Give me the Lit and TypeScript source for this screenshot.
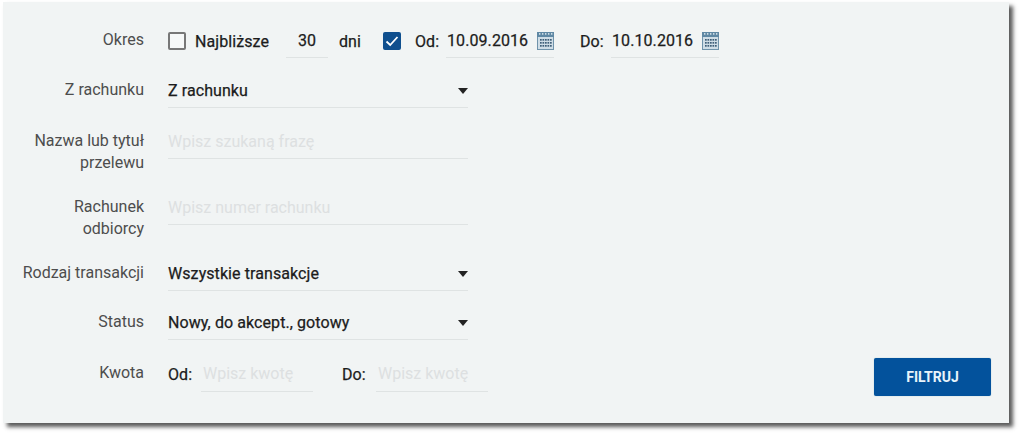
import { LitElement, html, css, svg } from "lit";
import { customElement } from "lit/decorators.js";

const cal = html`<svg class="cal" width="17" height="18" viewBox="0 0 17 18">
  <rect x="0.5" y="0.5" width="16" height="17" fill="#cfdde6" stroke="#6f93ab"/>
  <rect x="0" y="0" width="17" height="5" fill="#5f88a4"/>
  <g fill="#e8f0f4">${[2, 5, 8, 11, 14].map((x) => svg`<rect x="${x}" y="1.2" width="1.4" height="1.4"/>`)}</g>
  <g fill="#3f5f78">
    ${[7, 10, 13].flatMap((y) => [3, 5.5, 8, 10.5, 13].map((x) => svg`<rect x="${x}" y="${y}" width="1.7" height="1.7"/>`))}
  </g>
</svg>`;

@customElement("app-root")
export class AppRoot extends LitElement {
  static styles = css`
    :host { display: block; width: 1024px; height: 437px; background: #fff; overflow: hidden;
      font-family: Roboto, "Liberation Sans", sans-serif; font-size: 16px; color: #1c1c1c; }
    .panel { box-sizing: border-box; margin: 2px 0 0 3px; width: 1006px; height: 421px; background: #f1f4f4;
      box-shadow: 4px 4px 4px rgba(50,50,50,.8); padding: 0 18px 0 0; display: flex; flex-direction: column; }
    .row { display: grid; grid-template-columns: 123px 1fr; column-gap: 24px; align-items: start; padding-left: 18px; }
    .label { color: #4d4d4d; text-align: right; line-height: 22px; padding-top: 5px; }
    .ctl { display: flex; align-items: center; height: 34px; letter-spacing: .08px; -webkit-text-stroke: .25px #1c1c1c; }
    .r1 { margin-top: 22px; }
    .r2 { margin-top: 16px; }
    .r3 { margin-top: 17px; height: 49px; }
    .r4 { margin-top: 17px; height: 49px; }
    .r5 { margin-top: 17px; }
    .r6 { margin-top: 15px; }
    .r7 { margin-top: 18px; }
    .r7 .label { padding-top: 4px; }
    .r7 .u, .r7 .lbl { padding-bottom: 2px; }
    .field { box-sizing: border-box; width: 300px; height: 34px; border-bottom: 1px solid #dfe3e3; display: flex;
      align-items: center; justify-content: space-between; color: #1c1c1c; letter-spacing: .08px; }
    .val { -webkit-text-stroke: .25px #1c1c1c; }
    .ph, .ctl .ph { color: #dde0e1; -webkit-text-stroke: 0; letter-spacing: 0; }
    .arrow { width: 0; height: 0; border: 5.5px solid transparent; border-top: 6px solid #222; border-bottom: 0; }
    .box { box-sizing: border-box; width: 18px; height: 18px; border: 2px solid #777; border-radius: 2px; background: #f6f8f8; flex: none; }
    .box.on { background: #0f4f8e; border: 0; display: flex; align-items: center; justify-content: center; margin-left: 22px; }
    .u { border-bottom: 1px solid #dfe3e3; height: 34px; display: flex; align-items: center; box-sizing: border-box; }
    .naj { margin-left: 9px; width: 74px; white-space: nowrap; }
    .num { width: 42px; justify-content: center; margin-left: 17px; }
    .dni { margin-left: 11px; width: 22px; }
    .odl { margin-left: 14px; width: 24px; }
    .date { width: 108px; margin-left: 7px; padding-left: 1px; justify-content: space-between; }
    .dol { margin-left: 26px; width: 24px; }
    .od2 { width: 23px; }
    .kw { width: 112px; margin-left: 10px; padding-left: 2px; }
    .kdo { margin-left: 29px; width: 24px; }
    .cal { flex: none; }
    .btn { margin-left: auto; align-self: flex-start; width: 117px; height: 38px; box-sizing: border-box; border: 0; border-radius: 2px;
      background: #03529c; color: #e8f4fb; font: 700 14px Roboto, sans-serif; -webkit-text-stroke: 0; letter-spacing: 0; padding: 0; box-shadow: 0 0 1px #7ab; }
  `;
  render() {
    return html`<div class="panel">
      <div class="row r1"><div class="label">Okres</div><div class="ctl">
        <span class="box"></span><span class="naj">Najbliższe</span>
        <span class="u num">30</span><span class="dni">dni</span>
        <span class="box on"><svg width="14" height="12" viewBox="0 0 14 12"><path d="M1.5 6.5 L5.2 10 L12.5 2" fill="none" stroke="#fff" stroke-width="1.8"/></svg></span>
        <span class="odl">Od:</span><span class="u date">10.09.2016${cal}</span>
        <span class="dol">Do:</span><span class="u date">10.10.2016${cal}</span>
      </div></div>
      <div class="row r2"><div class="label">Z rachunku</div><div class="field"><span class="val">Z rachunku</span><span class="arrow"></span></div></div>
      <div class="row r3"><div class="label">Nazwa lub tytuł przelewu</div><div class="field"><span class="ph">Wpisz szukaną frazę</span></div></div>
      <div class="row r4"><div class="label">Rachunek odbiorcy</div><div class="field"><span class="ph">Wpisz numer rachunku</span></div></div>
      <div class="row r5"><div class="label">Rodzaj transakcji</div><div class="field"><span class="val">Wszystkie transakcje</span><span class="arrow"></span></div></div>
      <div class="row r6"><div class="label">Status</div><div class="field"><span class="val">Nowy, do akcept., gotowy</span><span class="arrow"></span></div></div>
      <div class="row r7"><div class="label">Kwota</div><div class="ctl">
        <span class="od2 lbl">Od:</span><span class="u kw ph">Wpisz kwotę</span>
        <span class="kdo lbl">Do:</span><span class="u kw ph">Wpisz kwotę</span>
        <button class="btn">FILTRUJ</button>
      </div></div>
    </div>`;
  }
}
